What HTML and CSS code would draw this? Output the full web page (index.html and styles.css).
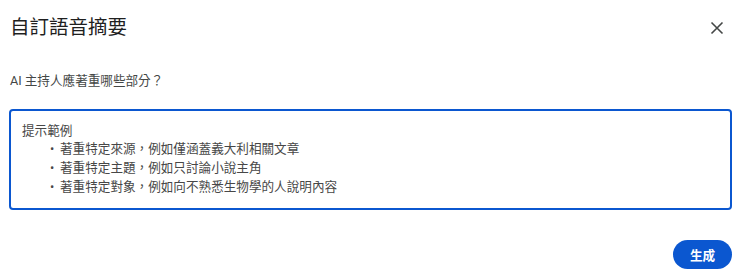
FILE: index.html
```html
<!DOCTYPE html>
<html lang="zh-Hant">
<head>
<meta charset="utf-8">
<link rel="stylesheet" href="styles.css">
</head>
<body>
<div class="dialog">
  <div class="header">
    <h1 class="title">自訂語音摘要</h1>
    <button class="close" aria-label="關閉">
      <svg width="14" height="14" viewBox="0 0 14 14"><path d="M1.5 1.5 L12.5 12.5 M12.5 1.5 L1.5 12.5" stroke="#444746" stroke-width="1.6" fill="none"/></svg>
    </button>
  </div>
  <div class="subtitle">AI 主持人應著重哪些部分？</div>
  <div class="box">
    <div class="line">提示範例</div>
    <div class="line item"><span class="bullet">•</span><span>著重特定來源，例如僅涵蓋義大利相關文章</span></div>
    <div class="line item"><span class="bullet">•</span><span>著重特定主題，例如只討論小說主角</span></div>
    <div class="line item"><span class="bullet">•</span><span>著重特定對象，例如向不熟悉生物學的人說明內容</span></div>
  </div>
  <div class="footer">
    <button class="generate">生成</button>
  </div>
</div>
</body>
</html>
```
FILE: styles.css
```css
html, body {
  margin: 0;
  padding: 0;
  background: #ffffff;
}
body {
  font-family: Roboto, "Noto Sans CJK TC", sans-serif;
}
.dialog {
  padding: 0 8px 0 9px;
}
.header {
  height: 56px;
  display: flex;
  align-items: center;
  justify-content: space-between;
}
.title {
  margin: 0;
  padding-left: 1px;
  font-size: 19.5px;
  font-weight: 400;
  color: #1f1f1f;
  line-height: 24px;
}
.close {
  width: 24px;
  height: 24px;
  margin-right: 3px;
  border: none;
  background: none;
  padding: 0;
  display: flex;
  align-items: center;
  justify-content: center;
}
.subtitle {
  margin-top: 16px;
  padding-left: 1px;
  font-size: 12.6px;
  line-height: 18px;
  color: #444746;
}
.box {
  margin-top: 19px;
  border: 2px solid #0b57d0;
  border-radius: 4px;
  padding: 10.5px 11px 11.5px 11px;
  font-size: 12.6px;
  line-height: 18.7px;
  color: #474747;
}
.item {
  display: flex;
  padding-left: 28px;
}
.bullet {
  width: 10px;
  flex: none;
}
.footer {
  margin-top: 30px;
  display: flex;
  justify-content: flex-end;
}
.generate {
  width: 59px;
  height: 29px;
  border: none;
  border-radius: 15px;
  background: #0b57d0;
  color: #ffffff;
  font-family: Roboto, "Noto Sans CJK TC", sans-serif;
  font-size: 12.6px;
  font-weight: 700;
  padding: 0;
}
```
